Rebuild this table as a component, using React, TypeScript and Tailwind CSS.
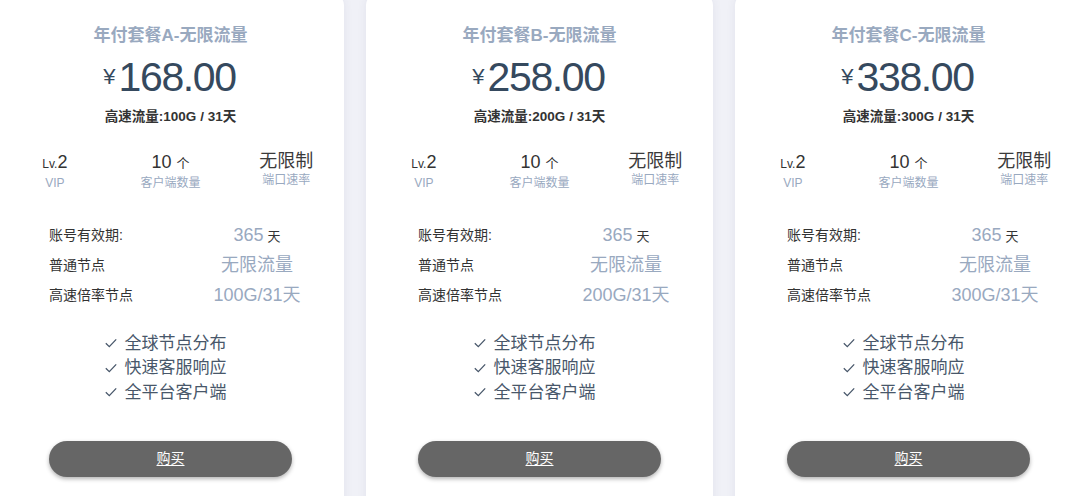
import React from "react";

type Plan = { letter: string; price: string; gb: string };

const plans: Plan[] = [
  { letter: "A", price: "168.00", gb: "100G" },
  { letter: "B", price: "258.00", gb: "200G" },
  { letter: "C", price: "338.00", gb: "300G" },
];

const font = { fontFamily: '"Liberation Sans", Arial, "Noto Sans CJK SC", sans-serif' };

function Check() {
  return (
    <svg width="12" height="10" viewBox="0 0 12 10" fill="none" className="shrink-0">
      <path d="M0.8 5.2 L4.3 8.6 L11.2 1.4" stroke="#48576a" strokeWidth="1.3" />
    </svg>
  );
}

function Card({ p }: { p: Plan }) {
  return (
    <div className="w-[347px] shrink-0 h-[520px] bg-white rounded-[10px] shadow-[0_0_10px_rgba(60,70,120,0.08)] pt-[29px] flex flex-col">
      <div className="text-center text-[17px] leading-[24px] font-bold text-[#99a9bf]">
        年付套餐{p.letter}-无限流量
      </div>
      <div className="mt-[4px] flex items-center justify-center h-[50px] text-[#35495e] -translate-x-[1px]">
        <span className="text-[22px] leading-[22px] mr-[3px]">¥</span>
        <span className="text-[41px] leading-[50px] tracking-[-1.4px]">{p.price}</span>
      </div>
      <div className="mt-[5px] text-center text-[13.5px] leading-[20px] font-bold text-[#333]">
        高速流量:{p.gb} / 31天
      </div>
      <div className="mt-[23px] grid grid-cols-3 text-center">
        <div className="flex flex-col">
          <div className="h-[24px] leading-[24px] text-[#333]">
            <span className="text-[12px]">Lv.</span>
            <span className="text-[18px]">2</span>
          </div>
          <div className="text-[12px] leading-[18px] text-[#99a9bf]">VIP</div>
        </div>
        <div className="flex flex-col">
          <div className="h-[24px] leading-[24px] text-[#333]">
            <span className="text-[18px]">10 </span>
            <span className="text-[13px]">个</span>
          </div>
          <div className="text-[12px] leading-[18px] text-[#99a9bf]">客户端数量</div>
        </div>
        <div className="flex flex-col">
          <div className="h-[22px] leading-[22px] text-[18px] text-[#3a3a3a]">无限制</div>
          <div className="text-[12px] leading-[16px] text-[#99a9bf]">端口速率</div>
        </div>
      </div>
      <div className="mt-[28px] pl-[52px] flex flex-col">
        {[
          ["账号有效期:", "365", true],
          ["普通节点", "无限流量", false],
          ["高速倍率节点", `${p.gb}/31天`, false],
        ].map(([k, v, day], i) => (
          <div key={i} className="flex items-center h-[30px]">
            <div className="w-[148px] text-[14px] text-[#333]">{k as string}</div>
            <div className="w-[120px] text-center text-[18px] text-[#99a9bf]">
              {v as string}
              {day ? <span className="text-[13px] text-[#333] ml-[4px]">天</span> : null}
            </div>
          </div>
        ))}
      </div>
      <div className="mt-[21px] mx-auto w-fit flex flex-col -translate-x-[5px]">
        {["全球节点分布", "快速客服响应", "全平台客户端"].map((t) => (
          <div key={t} className="flex items-center gap-[8px] h-[24.5px] text-[17px] text-[#48576a]">
            <Check />
            <span>{t}</span>
          </div>
        ))}
      </div>
      <div className="mt-[36px] mx-auto w-[243px] h-[36px] rounded-full bg-[#666] shadow-[0_2px_4px_rgba(0,0,0,0.3)] flex items-center justify-center">
        <span className="text-white text-[14px] underline underline-offset-2">购买</span>
      </div>
    </div>
  );
}

export default function App() {
  return (
    <div className="w-[1069px] h-[496px] overflow-hidden bg-[#f0f1f7]" style={font}>
      <div className="flex gap-[22px] -ml-[3px] -mt-[5px]">
        {plans.map((p) => (
          <Card key={p.letter} p={p} />
        ))}
      </div>
    </div>
  );
}
